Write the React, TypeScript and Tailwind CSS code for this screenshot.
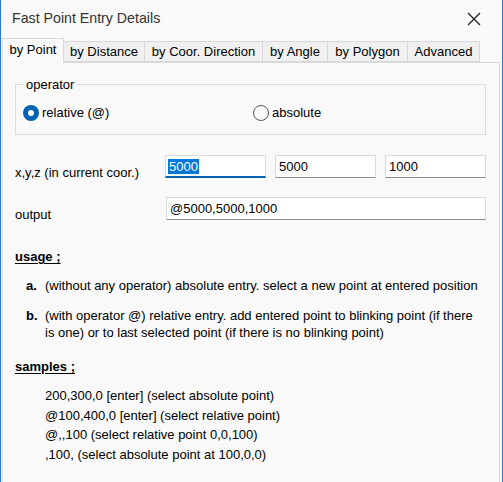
import React from "react";

const TABS = [
  { label: "by Point", w: "w-[62px]" },
  { label: "by Distance", w: "w-[81px]" },
  { label: "by Coor. Direction", w: "w-[118px]" },
  { label: "by Angle", w: "w-[65px]" },
  { label: "by Polygon", w: "w-[80px]" },
  { label: "Advanced", w: "w-[72px]" },
];

const SAMPLES = [
  "200,300,0 [enter] (select absolute point)",
  "@100,400,0 [enter] (select relative point)",
  "@,,100 (select relative point 0,0,100)",
  ",100, (select absolute point at 100,0,0)",
];

function Radio({ checked, label }: { checked?: boolean; label: string }) {
  return (
    <div className="flex items-center gap-[3px]">
      {checked ? (
        <span className="flex h-[16px] w-[16px] items-center justify-center rounded-full bg-[#0063b1]">
          <span className="h-[6px] w-[6px] rounded-full bg-white" />
        </span>
      ) : (
        <span className="h-[16px] w-[16px] rounded-full border border-[#555] bg-[#f9f9f9]" />
      )}
      <span className="leading-[16px]">{label}</span>
    </div>
  );
}

function Field({ value, w, focused }: { value: string; w: string; focused?: boolean }) {
  return (
    <div
      className={`${w} h-[23px] bg-white border border-[#dadada] flex items-center pl-[2px] ${
        focused ? "border-b-2 border-b-[#0063b1]" : "border-b-[#8c8c8c]"
      }`}
    >
      {focused ? (
        <span className="bg-[#0078d7] text-white leading-[15px] px-px">{value}</span>
      ) : (
        <span className="leading-[15px] px-px">{value}</span>
      )}
    </div>
  );
}

export default function App() {
  return (
    <div className="w-[503px] h-[482px] overflow-hidden bg-[#f9f9f9] border-x border-[#2b7bd3] font-['Liberation_Sans',Arial,sans-serif] text-[13px] text-black">
      {/* title bar */}
      <div className="h-[38px] flex items-center justify-between pl-[11px] pr-[21px]">
        <span className="text-[14.2px] text-[#333]">Fast Point Entry Details</span>
        <svg width="14" height="14" viewBox="0 0 14 14" className="text-[#222]">
          <path d="M1 1 L13 13 M13 1 L1 13" stroke="currentColor" strokeWidth="1.3" />
        </svg>
      </div>

      {/* tabs */}
      <div className="flex items-end ml-px h-[24px]">
        {TABS.map((t, i) =>
          i === 0 ? (
            <div
              key={t.label}
              className={`${t.w} h-[25px] -mb-px relative z-10 bg-[#f9f9f9] border border-b-0 border-[#d9d9d9] flex items-center justify-center pb-[2px]`}
            >
              {t.label}
            </div>
          ) : (
            <div
              key={t.label}
              className={`${t.w} h-[21px] bg-[#f0f0f0] border border-l-0 border-[#d9d9d9] flex items-center justify-center`}
            >
              {t.label}
            </div>
          )
        )}
      </div>

      {/* panel */}
      <div className="ml-px mr-[2px] h-[480px] border border-[#d9d9d9] pl-[12px] pt-[21px]">
        <div className="relative w-[471px] h-[51px] border border-[#dcdcdc] pl-[7px] pt-[20px] flex items-start">
          <span className="absolute -top-[8px] left-[7px] bg-[#f9f9f9] px-[3px] leading-[15px]">operator</span>
          <div className="w-[230px]">
            <Radio checked label="relative (@)" />
          </div>
          <Radio label="absolute" />
        </div>

        <div className="flex mt-[20px]">
          <div className="w-[150px] pt-[10px] leading-[15px]">x,y,z (in current coor.)</div>
          <div className="flex gap-[9px]">
            <Field value="5000" w="w-[101px]" focused />
            <Field value="5000" w="w-[101px]" />
            <Field value="1000" w="w-[101px]" />
          </div>
        </div>

        <div className="flex mt-[17px]">
          <div className="w-[151px] pt-[10px] leading-[15px]">output</div>
          <Field value="@5000,5000,1000" w="w-[320px]" />
        </div>

        <div className="mt-[27px] leading-[16px] font-bold underline underline-offset-2">usage ;</div>

        <div className="flex mt-[13px] pl-[11px] leading-[16px]">
          <span className="w-[19px] font-bold">a.</span>
          <span>(without any operator) absolute entry. select a new point at entered position</span>
        </div>
        <div className="flex mt-[14px] pl-[11px] leading-[16.6px]">
          <span className="w-[19px] shrink-0 font-bold">b.</span>
          <span className="w-[440px]">
            (with operator @) relative entry. add entered point to blinking point (if there is one) or to last
            selected point (if there is no blinking point)
          </span>
        </div>

        <div className="mt-[18px] leading-[16px] font-bold underline underline-offset-2">samples ;</div>

        <div className="mt-[11px] pl-[30px] leading-[19.5px]">
          {SAMPLES.map((s) => (
            <div key={s}>{s}</div>
          ))}
        </div>
      </div>
    </div>
  );
}
